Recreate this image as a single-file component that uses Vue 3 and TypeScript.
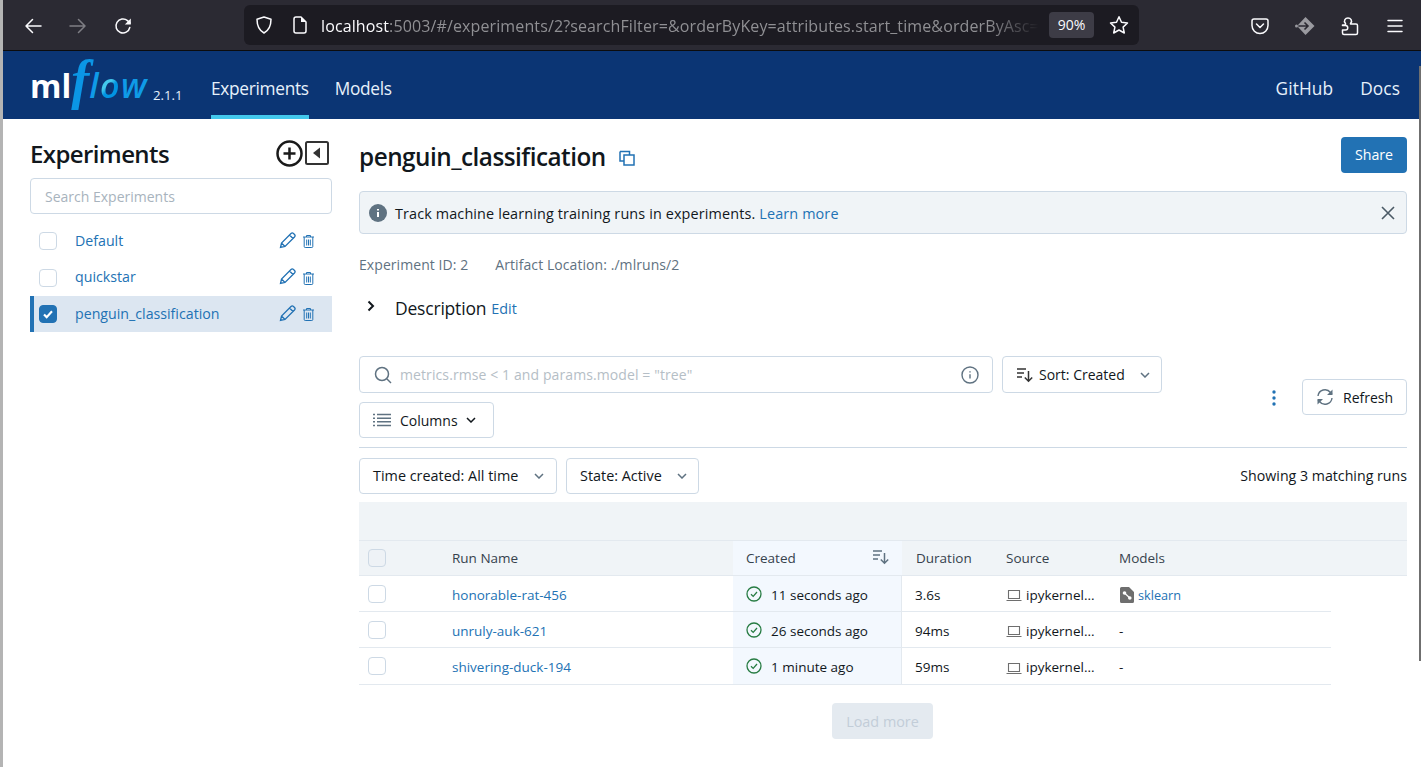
<script setup lang="ts">
interface Exp { name: string; selected: boolean }
interface Run { name: string; created: string; duration: string; model: string }
const experiments: Exp[] = [
  { name: 'Default', selected: false },
  { name: 'quickstar', selected: false },
  { name: 'penguin_classification', selected: true },
]
const runs: Run[] = [
  { name: 'honorable-rat-456', created: '11 seconds ago', duration: '3.6s', model: 'sklearn' },
  { name: 'unruly-auk-621', created: '26 seconds ago', duration: '94ms', model: '-' },
  { name: 'shivering-duck-194', created: '1 minute ago', duration: '59ms', model: '-' },
]
</script>

<template>
  <div class="page">
    <header class="browser">
      <div class="nav-btns">
        <svg class="bi" viewBox="0 0 20 20"><path d="M18 10H3M9.5 3.5 3 10l6.500 6.500" /></svg>
        <svg class="bi dim" viewBox="0 0 20 20"><path d="M2 10h15M10.500 3.500 17 10l-6.500 6.500" /></svg>
        <svg class="bi" viewBox="0 0 20 20"><path d="M16.800 11.500A7 7 0 1 1 14.500 4.600L17 7" /><path class="solid" d="M17.800 2.500v6h-6z" /></svg>
      </div>
      <div class="urlbar">
        <svg class="bi shield" viewBox="0 0 20 20"><path d="M10 2 3 4.300c0 7 2.200 11.200 7 13.700 4.800-2.500 7-6.700 7-13.700z" /></svg>
        <svg class="bi page-i" viewBox="0 0 20 20"><path d="M4 4a2 2 0 0 1 2-2h5l5 5v9a2 2 0 0 1-2 2H6a2 2 0 0 1-2-2z" /><path class="solid" d="M11 2l5 5h-5z" /></svg>
        <div class="url"><span class="host">localhost</span>:5003/#/experiments/2?searchFilter=&amp;orderByKey=attributes.start_time&amp;orderByAsc=</div>
        <div class="zoom-pill">90%</div>
        <svg class="bi star" viewBox="0 0 20 20"><path d="m10 1.800 2.500 5.500 6 .700-4.400 4.100 1.200 5.900-5.300-3-5.300 3 1.200-5.900L1.500 8l6-.700z" /></svg>
      </div>
      <div class="tools">
        <svg class="bi" viewBox="0 0 20 20"><path d="M4 3h12a2 2 0 0 1 2 2v4.500a8 8 0 0 1-16 0V5a2 2 0 0 1 2-2z" /><path d="m6.500 8 3.500 3.500L13.500 8" /></svg>
        <svg class="gem" viewBox="0 0 20 20"><path d="M10.500 1 19.500 10l-9 9L3.500 11.500v-3z" fill="#9a9aa0" /><circle cx="1.500" cy="10" r="1.500" fill="#9a9aa0" /><path d="M4 10h9M9.500 6.500 13 10l-3.500 3.500" fill="none" stroke="#2b2a33" stroke-width="1.600" /></svg>
        <svg class="bi" viewBox="0 0 20 20"><path d="M2.500 9h3V7.500c-2.500-3 0-5.500 2.500-5.500s5 2.500 2.500 5.500V8H16a1.500 1.500 0 0 1 1.500 1.500V17a1.500 1.500 0 0 1-1.500 1.500H4A1.500 1.500 0 0 1 2.500 17v-3h3a2.200 2.200 0 0 0 0-4.500h-3z" /></svg>
        <svg class="bi" viewBox="0 0 20 20"><path d="M3 4.500h14M3 10h14M3 15.500h14" /></svg>
      </div>
    </header>

    <nav class="topnav">
      <div class="logo"><span class="ml">ml</span><span class="flow"><span class="f">f</span>l<span class="o">o</span>w</span></div>
      <span class="version">2.1.1</span>
      <a class="tab active">Experiments</a>
      <a class="tab">Models</a>
      <div class="spacer"></div>
      <a class="ext">GitHub</a>
      <a class="ext">Docs</a>
    </nav>

    <div class="body">
      <aside class="side">
        <div class="side-head">
          <h2>Experiments</h2>
          <svg class="plus" viewBox="0 0 27 27"><circle cx="13.500" cy="13.500" r="12" /><path d="M13.500 7.500v12M7.500 13.500h12" /></svg>
          <svg class="collapse" viewBox="0 0 24 24"><rect x="1" y="1" width="22" height="22" rx="1.500" /><path class="tri" d="M15 6.500v11L8 12z" /></svg>
        </div>
        <div class="side-search">Search Experiments</div>
        <div class="exp-list">
          <div v-for="e in experiments" :key="e.name" class="exp" :class="{ sel: e.selected }">
            <span class="cb" :class="{ on: e.selected }">
              <svg v-if="e.selected" viewBox="0 0 18 18"><path d="m4.500 9.500 3 3 6-6.500" /></svg>
            </span>
            <span class="exp-name">{{ e.name }}</span>
            <svg class="pencil" viewBox="0 0 17 17"><path d="M1.500 15.500l1-4.500L12 1.500a1.800 1.800 0 0 1 2.500 0l1 1a1.800 1.800 0 0 1 0 2.500L6 14.500zM2.500 11 6 14.500M10.500 3l3.500 3.500" /></svg>
            <svg class="trash" viewBox="0 0 13 14"><path d="M1 3h11M4.500 3V1.500h4V3M2.200 3v9.500a1 1 0 0 0 1 1h6.600a1 1 0 0 0 1-1V3M4.700 5.500v6M6.500 5.500v6M8.300 5.500v6" /></svg>
          </div>
        </div>
      </aside>

      <main class="main">
        <div class="title-row">
          <h1>penguin_classification</h1>
          <svg class="copy" viewBox="0 0 16 16"><path d="M1 1.500h9.500V5M1 1.500V11h4" /><rect x="5" y="5" width="10" height="10" /></svg>
          <div class="spacer"></div>
          <button class="share">Share</button>
        </div>
        <div class="banner">
          <svg class="info-solid" viewBox="0 0 18 18"><circle cx="9" cy="9" r="9" fill="#5f7281" /><path d="M9 8v5M9 5v1.400" stroke="#fff" stroke-width="2" /></svg>
          <span class="banner-text">Track machine learning training runs in experiments.</span>
          <a class="link">Learn more</a>
          <div class="spacer"></div>
          <svg class="close" viewBox="0 0 14 14"><path d="M1 1l12 12M13 1 1 13" /></svg>
        </div>
        <div class="meta"><span>Experiment ID: 2</span><span>Artifact Location: ./mlruns/2</span></div>
        <div class="desc">
          <svg class="chev" viewBox="0 0 8 12"><path d="m1.500 1.500 4.500 4.500-4.500 4.500" /></svg>
          <span class="desc-label">Description</span>
          <a class="link edit">Edit</a>
        </div>

        <div class="controls">
          <div class="controls-left">
            <div class="searchbox">
              <svg class="mag" viewBox="0 0 18 18"><circle cx="8" cy="8" r="6.500" /><path d="m13 13 4 4" /></svg>
              <span class="ph">metrics.rmse &lt; 1 and params.model = "tree"</span>
              <div class="spacer"></div>
              <svg class="info-o" viewBox="0 0 18 18"><circle cx="9" cy="9" r="8" /><path d="M9 8.200v4.300M9 5.200v1.400" /></svg>
            </div>
            <button class="btn sort">
              <svg class="sort-i" viewBox="0 0 18 16"><path d="M1 2h9M1 6h7M1 10h5M12.500 4v10M8.800 10.500l3.700 3.700 3.700-3.700" /></svg>
              <span>Sort: Created</span>
              <svg class="caret grey" viewBox="0 0 10 6"><path d="m1 1 4 4 4-4" /></svg>
            </button>
            <button class="btn columns">
              <svg class="list-i" viewBox="0 0 18 14"><path d="M4 1.500h14M4 5.200h14M4 8.800h14M4 12.500h14M0 1.500h2M0 5.200h2M0 8.800h2M0 12.500h2" /></svg>
              <span>Columns</span>
              <svg class="caret" viewBox="0 0 10 6"><path d="m1 1 4 4 4-4" /></svg>
            </button>
          </div>
          <div class="controls-right">
            <svg class="kebab" viewBox="0 0 4 16"><circle cx="2" cy="2" r="1.700" /><circle cx="2" cy="8" r="1.700" /><circle cx="2" cy="14" r="1.700" /></svg>
            <button class="btn refresh">
              <svg class="refresh-i" viewBox="0 0 18 18"><path d="M2 8a7 7 0 0 1 12.500-3.500L16 6M16 10a7 7 0 0 1-12.500 3.500L2 12" /><path class="fillp" d="M16.500 1.500v5.500H11zM1.500 16.500V11H7z" /></svg>
              <span>Refresh</span>
            </button>
          </div>
        </div>

        <div class="filters">
          <button class="btn filter time"><span>Time created: All time</span><svg class="caret grey" viewBox="0 0 10 6"><path d="m1 1 4 4 4-4" /></svg></button>
          <button class="btn filter state"><span>State: Active</span><svg class="caret grey" viewBox="0 0 10 6"><path d="m1 1 4 4 4-4" /></svg></button>
          <div class="spacer"></div>
          <span class="showing">Showing 3 matching runs</span>
        </div>

        <div class="table">
          <div class="band"></div>
          <div class="tr head">
            <div class="c-check"><span class="cb small dis"></span></div>
            <div class="c-name">Run Name</div>
            <div class="c-created">
              <span>Created</span>
              <svg class="sort-h" viewBox="0 0 18 16"><path d="M1 2h9M1 6h7M1 10h5M12.500 4v10M8.800 10.500l3.700 3.700 3.700-3.700" /></svg>
            </div>
            <div class="c-dur">Duration</div>
            <div class="c-src">Source</div>
            <div class="c-mod">Models</div>
          </div>
          <div v-for="r in runs" :key="r.name" class="tr row">
            <div class="c-check"><span class="cb small"></span></div>
            <div class="c-name"><a class="link">{{ r.name }}</a></div>
            <div class="c-created">
              <svg class="ok" viewBox="0 0 16 16"><circle cx="8" cy="8" r="7" /><path d="m5 8.200 2.200 2.200L11 6" /></svg>
              <span>{{ r.created }}</span>
            </div>
            <div class="c-dur">{{ r.duration }}</div>
            <div class="c-src">
              <svg class="laptop" viewBox="0 0 16 13"><path d="M2.500 1.500h11v8h-11zM.500 11.500h15" /></svg>
              <span>ipykernel...</span>
            </div>
            <div class="c-mod">
              <template v-if="r.model !== '-'">
                <svg class="model" viewBox="0 0 14 16"><path d="M1.500 0h7.500l5 5v9.500a1.500 1.500 0 0 1-1.500 1.500h-11A1.500 1.500 0 0 1 0 14.500v-13A1.500 1.500 0 0 1 1.500 0z" fill="#6e6e6e" /><circle cx="4.500" cy="6" r="1.800" fill="#fff" /><circle cx="9.800" cy="11" r="1.800" fill="#fff" /><path d="M4.500 6l5.300 5" stroke="#fff" stroke-width="1.200" /></svg>
                <a class="link model-link">{{ r.model }}</a>
              </template>
              <template v-else>-</template>
            </div>
          </div>
        </div>
        <div class="more"><button class="load">Load more</button></div>
      </main>
    </div>
    <div class="scrollbar"></div>
  </div>
</template>

<style>
html, body { margin: 0; padding: 0; background: #fff; overflow: hidden; }
</style>

<style scoped>
.page { width: 1421px; height: 767px; position: relative; overflow: hidden; display: flex; flex-direction: column; font-family: "Open Sans", "Noto Sans", sans-serif; font-size: 14px; color: #11171c; border-left: 3px solid #b4b4b4; box-sizing: border-box; }
.spacer { flex: 1; }
svg { display: block; flex: none; }
button { font: inherit; letter-spacing: inherit; color: inherit; padding: 0; }

.browser { height: 51px; flex: none; box-sizing: border-box; border-bottom: 1px solid #0c0c0d; background: #2b2a33; display: flex; align-items: center; position: relative; }
.bi { width: 20px; height: 20px; fill: none; stroke: #fbfbfe; stroke-width: 1.500; stroke-linecap: round; stroke-linejoin: round; }
.bi .solid { fill: #fbfbfe; stroke: none; }
.bi.dim { opacity: .4; }
.nav-btns { display: flex; gap: 25px; margin-left: 20px; width: 221px; margin-top: 1px; }
.urlbar { width: 895px; height: 40px; margin-top: -1px; background: #1c1b22; border-radius: 6px; display: flex; align-items: center; box-sizing: border-box; padding-left: 10px; }
.page-i { margin-left: 16px; }
.url { width: 718px; margin-left: 11px; margin-top: 2px; white-space: nowrap; overflow: hidden; color: #8f8f93; font-size: 16px; letter-spacing: 0.120px; -webkit-mask-image: linear-gradient(to right, #000 93%, transparent); mask-image: linear-gradient(to right, #000 93%, transparent); }
.host { color: #fbfbfe; }
.zoom-pill { width: 45px; height: 26px; margin-left: 10px; border-radius: 4px; background: #3d3c46; color: #fbfbfe; font-size: 14px; display: flex; align-items: center; justify-content: center; }
.star { margin-left: 15px; }
.tools { display: flex; align-items: center; margin-left: 111px; gap: 25px; margin-top: 1px; }
.gem { width: 20px; height: 20px; }

.topnav { height: 68px; flex: none; background: #0b3574; display: flex; align-items: center; padding: 0 21px 0 27px; color: #e7f1fb; font-size: 17.300px; letter-spacing: -0.300px; }
.logo { width: 123px; height: 68px; display: flex; align-items: baseline; font-size: 32px; line-height: 68px; white-space: nowrap; box-sizing: border-box; letter-spacing: 0; }
.ml { color: #fff; font-weight: 700; }
.flow { color: #0f9be8; font-style: italic; font-weight: 600; font-size: 34px; letter-spacing: 1.500px; }
.f { font-family: "Liberation Serif", serif; font-weight: 700; font-size: 54px; line-height: 0; color: #0b96e5; letter-spacing: 0; }
.o { background: linear-gradient(135deg, #43c9ed 45%, #0194e2 55%); -webkit-background-clip: text; background-clip: text; color: transparent; }
.version { font-size: 13.200px; letter-spacing: 0; margin-top: 20px; width: 58px; color: #e7f1fb; }
.tab { height: 68px; line-height: 75px; box-sizing: border-box; margin-right: 26px; }
.tab.active { border-bottom: 4px solid #43c9ed; }
.ext { margin-left: 27px; padding-top: 6px; letter-spacing: 0.100px; }
.ext:first-of-type { margin-left: 0; }

.body { flex: 1; display: flex; min-height: 0; }
.side { width: 302px; margin-left: 27px; flex: none; }
.side-head { height: 59px; padding-top: 9px; box-sizing: border-box; display: flex; align-items: center; }
.side-head h2 { margin: 0; font-size: 24px; font-weight: 600; letter-spacing: -0.600px; flex: 1; color: #11171c; }
.plus { width: 27px; height: 27px; fill: none; stroke: #1a1a1a; stroke-width: 2.500; }
.collapse { width: 24px; height: 24px; margin-left: 2px; margin-right: 3px; fill: none; stroke: #333; stroke-width: 2; }
.tri { fill: #333; stroke: none; }
.side-search { height: 36px; box-sizing: border-box; border: 1px solid #cdd9e5; border-radius: 4px; padding-left: 14px; line-height: 35px; color: #a8b3bd; }
.exp-list { margin-top: 9px; }
.exp { height: 36px; display: flex; align-items: center; color: #2272b4; padding-left: 9px; box-sizing: border-box; }
.exp:nth-child(2) { height: 37px; }
.exp.sel { background: #dce6f1; border-left: 4px solid #2272b4; padding-left: 5px; }
.cb { width: 18px; height: 18px; box-sizing: border-box; border: 1px solid #cdd9e5; border-radius: 4px; background: #fff; flex: none; display: block; }
.cb.on { background: #2272b4; border-color: #2272b4; }
.cb svg { width: 16px; height: 16px; fill: none; stroke: #fff; stroke-width: 2.400; }
.exp-name { margin-left: 18px; flex: 1; font-size: 14.200px; padding-bottom: 2px; }
.pencil { width: 17px; height: 17px; margin-top: -2px; fill: none; stroke: #2272b4; stroke-width: 1.300; }
.trash { width: 13px; height: 14px; margin: 0 17px 0 6px; fill: none; stroke: #2272b4; stroke-width: 1; }

.main { width: 1048px; margin-left: 27px; flex: none; }
.title-row { height: 72px; display: flex; align-items: center; }
h1 { margin: 0; font-size: 24.300px; font-weight: 600; letter-spacing: -0.500px; color: #11171c; padding-top: 2px; }
.copy { width: 16px; height: 16px; margin-left: 13px; margin-top: 5px; fill: none; stroke: #2272b4; stroke-width: 1.500; }
.share { width: 66px; height: 36px; background: #2272b4; color: #fff; border: 0; border-radius: 4px; margin-top: -1px; font-size: 14.200px; }
.banner { height: 43px; box-sizing: border-box; border: 1px solid #cdd9e5; border-radius: 4px; background: #f0f4f7; display: flex; align-items: center; padding: 0 11px 0 9px; font-size: 14.400px; letter-spacing: 0.130px; }
.banner-text, .banner .link { padding-top: 2px; }
.info-solid { width: 18px; height: 18px; margin-right: 8px; }
.link { color: #2272b4; }
.banner .link { margin-left: 4px; }
.close { width: 14px; height: 14px; fill: none; stroke: #4b5a66; stroke-width: 1.600; }
.meta { margin-top: 22px; height: 18px; line-height: 18px; color: #5f7281; display: flex; gap: 27px; letter-spacing: 0.070px; }
.desc { margin-top: 21px; height: 26px; display: flex; align-items: center; }
.chev { width: 8px; height: 12px; margin-left: 8px; margin-top: -5px; fill: none; stroke: #11171c; stroke-width: 2; }
.desc-label { font-size: 17.500px; margin-left: 20px; letter-spacing: -0.200px; }
.edit { margin-left: 5px; font-size: 14.400px; }

.controls { margin-top: 35px; display: flex; justify-content: space-between; }
.controls-left { width: 803px; display: flex; flex-wrap: wrap; column-gap: 9px; row-gap: 9px; }
.searchbox { width: 634px; height: 37px; box-sizing: border-box; border: 1px solid #cdd9e5; border-radius: 4px; display: flex; align-items: center; padding: 0 14px; }
.mag { width: 18px; height: 18px; fill: none; stroke: #5f7281; stroke-width: 1.500; }
.ph { margin-left: 8px; color: #b5bec6; font-size: 14px; letter-spacing: 0.100px; }
.info-o { width: 18px; height: 18px; margin-right: -1px; fill: none; stroke: #5f7281; stroke-width: 1.400; }
.btn { box-sizing: border-box; background: #fff; border: 1px solid #cdd9e5; border-radius: 4px; display: flex; align-items: center; }
.sort { width: 160px; height: 37px; padding: 0 11px 0 13px; }
.sort-i { width: 18px; height: 16px; margin-right: 5px; fill: none; stroke: #333; stroke-width: 1.500; }
.caret { width: 10px; height: 6px; fill: none; stroke: #11171c; stroke-width: 1.500; margin-left: auto; }
.caret.grey { stroke: #5f7281; }
.columns { width: 135px; height: 36px; padding: 0 17px 0 13px; }
.list-i { width: 18px; height: 14px; margin-right: 9px; fill: none; stroke: #5f7281; stroke-width: 1.400; }
.controls-right { display: flex; align-items: flex-start; padding-top: 23px; }
.kebab { width: 4px; height: 16px; margin: 11px 26px 0 0; fill: #2272b4; }
.refresh { width: 105px; height: 36px; padding-left: 13px; }
.refresh-i { width: 18px; height: 18px; margin-right: 9px; fill: none; stroke: #5f7281; stroke-width: 1.400; }
.fillp { fill: #5f7281; stroke: none; }

.filters { margin-top: 9px; border-top: 1px solid #cdd9e5; padding-top: 10px; display: flex; gap: 9px; align-items: center; }
.filter { height: 36px; font-size: 14.400px; padding: 0 12px 0 13px; }
.filter span { padding-bottom: 2px; }
.state { padding-right: 11px; }
.time { width: 198px; }
.state { width: 133px; }
.showing { font-size: 14.200px; padding-bottom: 2px; }

.table { margin-top: 8px; font-size: 13.500px; }
.band { height: 38px; background: #f0f4f7; }
.tr { display: grid; grid-template-columns: 93px 281px 169px 104px 113px 1fr; align-items: stretch; border-bottom: 1px solid #e3e9ef; box-sizing: border-box; height: 36px; }
.tr > div { display: flex; align-items: center; }
.head { background: #f0f4f7; border-top: 1px solid #e3e9ef; width: 100%; color: #36424d; font-weight: 500; }
.row { width: 972px; }
.row:last-child { height: 37px; }
.c-check { padding-left: 9px; }
.cb.small.dis { background: #eef2f6; }
.head .c-created { background: #f3f8fe; padding: 0 13px; justify-content: space-between; }
.row .c-created { background: #f3f8fe; padding-left: 13px; border-right: 1px solid #e3e9ef; gap: 9px; }
.row .c-name, .row .c-created, .row .c-dur, .row .c-src, .row .c-mod { padding-top: 2px; box-sizing: border-box; }
.c-dur { padding-left: 13px; }
.head .c-dur { padding-left: 14px; }
.sort-h { width: 18px; height: 16px; fill: none; stroke: #5f7281; stroke-width: 1.500; margin-top: -3px; margin-right: -1px; }
.ok { width: 16px; height: 16px; fill: none; stroke: #277c43; stroke-width: 1.300; margin-top: -2px; }
.laptop { width: 16px; height: 13px; margin-right: 4px; fill: none; stroke: #6e6e6e; stroke-width: 1.100; margin-top: 2px; }
.model { width: 14px; height: 16px; margin-right: 4px; margin-left: 1px; }
.model-link { font-size: 12.700px; }
.more { display: flex; justify-content: center; margin-top: 18px; }
.load { width: 101px; height: 36px; border: 0; border-radius: 4px; background: #e4eaf0; color: #c2cdd8; font-size: 14.400px; margin-left: -1px; }
.scrollbar { position: absolute; right: 0; top: 66px; width: 2px; height: 595px; background: #6f6f6f; }
</style>
